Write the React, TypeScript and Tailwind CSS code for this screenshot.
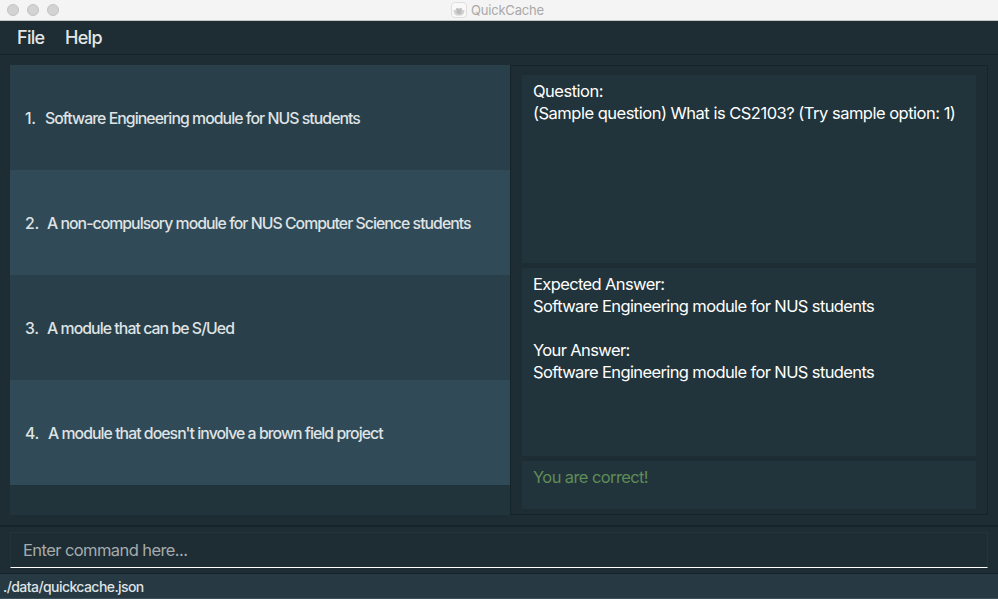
const options = [
  { n: '1.', gap: 'w-[20px]', text: 'Software Engineering module for NUS students', tracking: 'tracking-[-0.94px]' },
  { n: '2.', gap: 'w-[22px]', text: 'A non-compulsory module for NUS Computer Science students', tracking: 'tracking-[-0.96px]' },
  { n: '3.', gap: 'w-[22px]', text: 'A module that can be S/Ued', tracking: 'tracking-[-0.93px]' },
  { n: '4.', gap: 'w-[23px]', text: "A module that doesn't involve a brown field project", tracking: 'tracking-[-0.95px]' },
];

function TitleBar() {
  return (
    <header className="flex h-[21px] shrink-0 items-center border-b border-[#c4c4c4] bg-[#f4f4f4]">
      <div className="flex w-[451px] gap-2 pl-[7px]">
        {[0, 1, 2].map((i) => (
          <span key={i} className="size-3 rounded-full border border-[#c3c3c3] bg-[#d3d3d3]" />
        ))}
      </div>
      <svg className="size-4" viewBox="0 0 16 16">
        <rect x="0.5" y="0.5" width="15" height="15" rx="3.5" fill="#f9f9f9" stroke="#dedede" />
        <path d="M2.500 8 4.500 8 5.500 6 7 6.500 8 7.500 9 6.500 10.500 6 11.500 8 13.500 8c0 3-1.500 5.500-4 5.500h-3c-2.500 0-4-2.500-4-5.500Z" fill="#d2d2d2" />
        <path d="M5.500 6 7 6.500h2L10.500 6v5L8 12.500 5.500 11Z" fill="#bcbcbc" />
      </svg>
      <span className="ml-1 whitespace-pre text-[13px] leading-4 tracking-[-0.2px] text-[#a9a9a9]">QuickCache</span>
    </header>
  );
}

export default function App() {
  return (
    <div className="flex h-[599px] w-[998px] flex-col overflow-hidden bg-[#1e2d34] font-['Inter',sans-serif]">
      <TitleBar />
      <nav className="flex h-[34px] shrink-0 items-center border-b border-[#15232a] pl-[17px] text-[18px] font-[450] tracking-[-0.7px] text-[#e3e6e7]">
        <span className="w-12">File</span>
        <span>Help</span>
      </nav>
      <main className="flex h-[460px] shrink-0 px-[10px] pt-[10px]">
        <ol className="h-[450px] w-[500px] bg-[#22343b]">
          {options.map((o, i) => (
            <li
              key={o.n}
              className={`flex h-[105px] items-center whitespace-pre pl-[15px] pt-[3px] text-[15.8px] font-[450] leading-5 text-[#dfe3e5] ${i % 2 ? 'bg-[#314a57]' : 'bg-[#293f49]'}`}
            >
              <span className={`${o.gap} tracking-[-0.3px]`}>{o.n}</span>
              <span className={o.tracking}>{o.text}</span>
            </li>
          ))}
        </ol>
        <section className="flex h-[450px] w-[478px] flex-col gap-[5px] whitespace-pre border border-[#15232a] pl-[11px] pt-[9px] text-[16.5px] leading-[22px] tracking-[-0.62px] text-white">
          <div className="h-[188px] w-[454px] bg-[#22343b] px-[11px] pt-[5px]">
            <p className="tracking-[-0.5px]">Question:</p>
            <p className="tracking-[-0.5px]">(Sample question) What is CS2103? (Try sample option: 1)</p>
          </div>
          <div className="h-[188px] w-[454px] bg-[#22343b] px-[11px] pt-[5px]">
            <p>Expected Answer:</p>
            <p>Software Engineering module for NUS students</p>
            <p className="mt-[22px]">Your Answer:</p>
            <p>Software Engineering module for NUS students</p>
          </div>
          <div className="h-12 w-[454px] bg-[#22343b] px-[11px] pt-[5px] tracking-[-0.6px] text-[#5f8c57]">
            You are correct!
          </div>
        </section>
      </main>
      <div className="mt-[10px] h-[2px] shrink-0 bg-[#15232a]" />
      <div className="mx-[10px] mt-[5px] flex h-9 shrink-0 items-center border border-b-white border-l-[#22343b] border-r-[#22343b] border-t-[#22343b] pl-3 text-[16.5px] tracking-[-0.58px] text-[#a5abad]">
        Enter command here...
      </div>
      <footer className="mt-[5px] flex h-[26px] shrink-0 items-center border-b border-t border-b-[#3d5059] border-t-[#15232a] bg-[#273942] pl-[3px] text-[14px] font-[450] tracking-[-0.57px] text-[#dfe3e5]">
        ./data/quickcache.json
      </footer>
    </div>
  );
}
